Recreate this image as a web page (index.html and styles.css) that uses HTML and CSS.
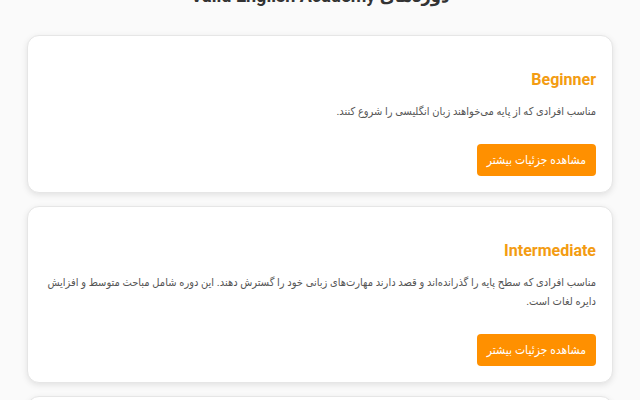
FILE: index.html
```html
<!DOCTYPE html>
<html lang="fa" dir="rtl">
<head>
  <meta charset="UTF-8">
  <meta name="viewport" content="width=device-width, initial-scale=1.0">
  <title>دوره‌های Valid English Academy</title>
  <link rel="stylesheet" href="styles.css">
</head>
<body>
  <div class="page">
    <h1>دوره‌های Valid English Academy</h1>

    <div class="course">
      <h3>Beginner</h3>
      <p>مناسب افرادی که از پایه می‌خواهند زبان انگلیسی را شروع کنند.</p>
      <button class="more">مشاهده جزئیات بیشتر</button>
    </div>

    <div class="course">
      <h3>Intermediate</h3>
      <p>مناسب افرادی که سطح پایه را گذرانده‌اند و قصد دارند مهارت‌های زبانی خود را گسترش دهند. این دوره شامل مباحث متوسط و افزایش دایره لغات است.</p>
      <button class="more">مشاهده جزئیات بیشتر</button>
    </div>

    <div class="course">
      <h3>Advanced</h3>
      <p>مناسب افرادی که می‌خواهند به سطح پیشرفته زبان انگلیسی برسند.</p>
      <button class="more">مشاهده جزئیات بیشتر</button>
    </div>
  </div>
</body>
</html>
```

FILE: styles.css
```css
body {
  margin: 0;
  font-family: Roboto, "DejaVu Sans Condensed", "DejaVu Sans", sans-serif;
  background: #fafafa;
  color: #333;
}
.page {
  padding: 0 27px 20px;
}
h1 {
  margin: -16px 0 27px;
  font-size: 18px;
  line-height: 24px;
  text-align: center;
  color: #333;
}
.course {
  background: #fff;
  border: 1px solid #e6e6e6;
  border-radius: 12px;
  box-shadow: 0 2px 6px rgba(0, 0, 0, 0.1);
  padding: 16px;
  margin-bottom: 13px;
}
.course h3 {
  margin: 18px 0 12px;
  font-size: 16px;
  line-height: 20px;
  font-weight: 700;
  color: #f39c12;
}
.course p {
  margin: 0 0 23px;
  font-size: 11px;
  line-height: 19px;
  color: #555;
}
.more {
  height: 32px;
  padding: 0 10px;
  background: #ff9000;
  color: #fff;
  border: none;
  border-radius: 4px;
  font-family: inherit;
  font-size: 12px;
  cursor: pointer;
}
```
